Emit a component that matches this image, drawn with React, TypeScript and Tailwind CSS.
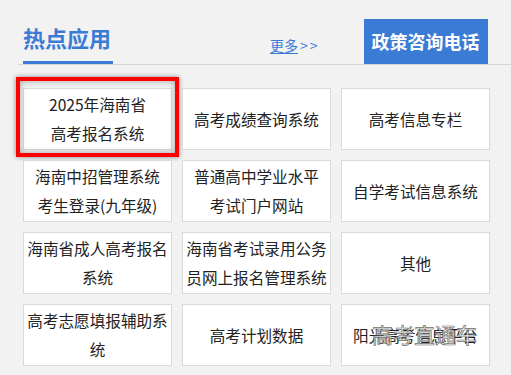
import * as React from "react"

const cells: string[][] = [
  ["2025年海南省", "高考报名系统"],
  ["高考成绩查询系统"],
  ["高考信息专栏"],
  ["海南中招管理系统", "考生登录(九年级)"],
  ["普通高中学业水平", "考试门户网站"],
  ["自学考试信息系统"],
  ["海南省成人高考报名系统"],
  ["海南省考试录用公务员网上报名管理系统"],
  ["其他"],
  ["高考志愿填报辅助系统"],
  ["高考计划数据"],
  ["阳光高考信息平台"],
]

const App = () => {
  return (
    <div
      className="w-[511px] h-[375px] overflow-hidden bg-[#f2f2f2] pl-[18px]"
      style={{ fontFamily: '"Microsoft YaHei", "Noto Sans CJK SC", sans-serif' }}
    >
      <div className="flex items-end h-[65px] border-b border-[#d6d6d6]">
        <div className="ml-[5px] w-[90px] border-b-[3px] border-[#3a7bd5] pb-[9px]">
          <h2 className="text-[22px] leading-[30px] font-bold text-[#3a7bd5]">
            热点应用
          </h2>
        </div>
        <a className="ml-[157px] mb-[9px] text-[14px] leading-[20px] text-[#3a7bd5]">
          <span className="underline underline-offset-2">更多</span>
          <span className="ml-[2px] tracking-[2px]">&gt;&gt;</span>
        </a>
        <div className="ml-[44px] w-[124px] h-[45px] bg-[#3a7bd5] flex items-center justify-center text-white text-[18px] font-bold">
          政策咨询电话
        </div>
      </div>

      <div className="ml-[5px] mt-[23px] w-[467px] grid grid-cols-3 gap-[10px]">
        {cells.map((lines, i) => (
          <div
            key={i}
            className="relative h-[62px] bg-white border border-[#dadada] flex items-center justify-center text-center text-[15.6px] leading-[29px] text-[#222]"
          >
            <span>
              {lines.map((l, j) => (
                <React.Fragment key={j}>
                  {j > 0 && <br />}
                  {l}
                </React.Fragment>
              ))}
            </span>
            {i === 0 && (
              <div className="absolute left-[-8px] top-[-12px] right-[-8px] bottom-[-8px] border-4 border-[#ff0000] shadow-[0_0_5px_rgba(0,0,0,0.45),inset_0_0_6px_rgba(0,0,0,0.35)]" />
            )}
            {i === 11 && (
              <div className="absolute left-[30px] top-[14px] text-[21px] leading-[30px] text-[#eeeeee]/80 [-webkit-text-stroke:0.7px_#6f6f6f]">
                高考直通车
              </div>
            )}
          </div>
        ))}
      </div>
    </div>
  )
}

export default App
